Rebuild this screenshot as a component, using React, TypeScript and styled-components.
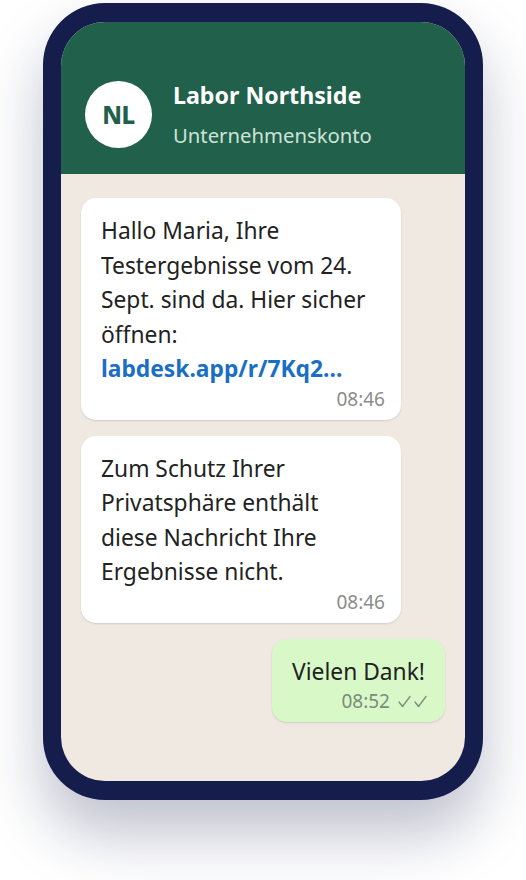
import React from 'react';
import styled, { createGlobalStyle } from 'styled-components';

const GlobalStyle = createGlobalStyle`
    html, body {
        margin: 0;
        padding: 0;
        background: #ffffff;
    }
    body {
        font-family: "Noto Sans", "Open Sans", sans-serif;
    }
`;

const Page = styled.div`
    width: 526px;
    height: 880px;
    display: flex;
    justify-content: center;
    padding-top: 3px;
    box-sizing: border-box;
`;

const Phone = styled.div`
    width: 440px;
    height: 797px;
    box-sizing: border-box;
    background: #141d4c;
    border-radius: 62px;
    padding: 19px 18px;
    box-shadow: 0 34px 60px rgba(24, 34, 80, 0.28);
`;

const Screen = styled.div`
    height: 100%;
    border-radius: 44px;
    overflow: hidden;
    background: #efe9e2;
    display: flex;
    flex-direction: column;
`;

const Header = styled.div`
    height: 152px;
    flex-shrink: 0;
    background: #21604b;
    display: flex;
    align-items: center;
    gap: 21px;
    padding: 32px 0 0 24px;
    box-sizing: border-box;
`;

const Avatar = styled.div`
    width: 67px;
    height: 67px;
    border-radius: 50%;
    background: #ffffff;
    color: #21604b;
    font-weight: 800;
    font-size: 24px;
    display: flex;
    align-items: center;
    justify-content: center;
    letter-spacing: -0.5px;
`;

const Titles = styled.div`
    display: flex;
    flex-direction: column;
    gap: 11px;
`;

const Title = styled.div`
    color: #ffffff;
    font-weight: 700;
    font-size: 23.2px;
    line-height: 30px;
`;

const Subtitle = styled.div`
    color: #cde3d8;
    font-size: 20.3px;
    line-height: 28px;
`;

const Chat = styled.div`
    flex: 1;
    display: flex;
    flex-direction: column;
    gap: 16px;
    padding: 24px 20px;
`;

const Bubble = styled.div<{ out?: boolean }>`
    align-self: ${props => props.out ? 'flex-end' : 'flex-start'};
    width: ${props => props.out ? 'auto' : '320px'};
    box-sizing: border-box;
    background: ${props => props.out ? '#d9f8c8' : '#ffffff'};
    border-radius: 15px;
    padding: 16px 20px 11px 20px;
    box-shadow: 0 1px 2px rgba(0, 0, 0, 0.12);
    display: flex;
    flex-direction: column;
    align-items: ${props => props.out ? 'flex-end' : 'stretch'};
`;

const Text = styled.div`
    color: #222222;
    font-size: 22.8px;
    line-height: 34.5px;
`;

const Link = styled.span`
    color: #1a6fc4;
    font-weight: 700;
`;

const Meta = styled.div<{ out?: boolean }>`
    align-self: flex-end;
    display: flex;
    align-items: center;
    gap: 8px;
    margin-top: 2px;
    color: ${props => props.out ? '#7a8c7a' : '#8a8d8a'};
    font-size: 19px;
    line-height: 20px;
    margin-right: ${props => props.out ? '-3px' : '-4px'};
`;

const DoubleCheck = () => (
    <svg width="30" height="13" viewBox="0 0 30 13" fill="none" stroke="#7f917f" strokeWidth="1.4" strokeLinecap="round" strokeLinejoin="round">
        <path d="M1 7 L4.5 11.5 L12 1.5" />
        <path d="M17 7 L20.5 11.5 L28 1.5" />
    </svg>
);

export default function App() {
    return (
        <Page>
            <GlobalStyle />
            <Phone>
                <Screen>
                    <Header>
                        <Avatar>NL</Avatar>
                        <Titles>
                            <Title>Labor Northside</Title>
                            <Subtitle>Unternehmenskonto</Subtitle>
                        </Titles>
                    </Header>
                    <Chat>
                        <Bubble>
                            <Text>
                                Hallo Maria, Ihre<br />
                                Testergebnisse vom 24.<br />
                                Sept. sind da. Hier sicher<br />
                                öffnen:<br />
                                <Link>labdesk.app/r/7Kq2…</Link>
                            </Text>
                            <Meta>08:46</Meta>
                        </Bubble>
                        <Bubble>
                            <Text>
                                Zum Schutz Ihrer<br />
                                Privatsphäre enthält<br />
                                diese Nachricht Ihre<br />
                                Ergebnisse nicht.
                            </Text>
                            <Meta>08:46</Meta>
                        </Bubble>
                        <Bubble out>
                            <Text>Vielen Dank!</Text>
                            <Meta out>
                                08:52
                                <DoubleCheck />
                            </Meta>
                        </Bubble>
                    </Chat>
                </Screen>
            </Phone>
        </Page>
    );
}
